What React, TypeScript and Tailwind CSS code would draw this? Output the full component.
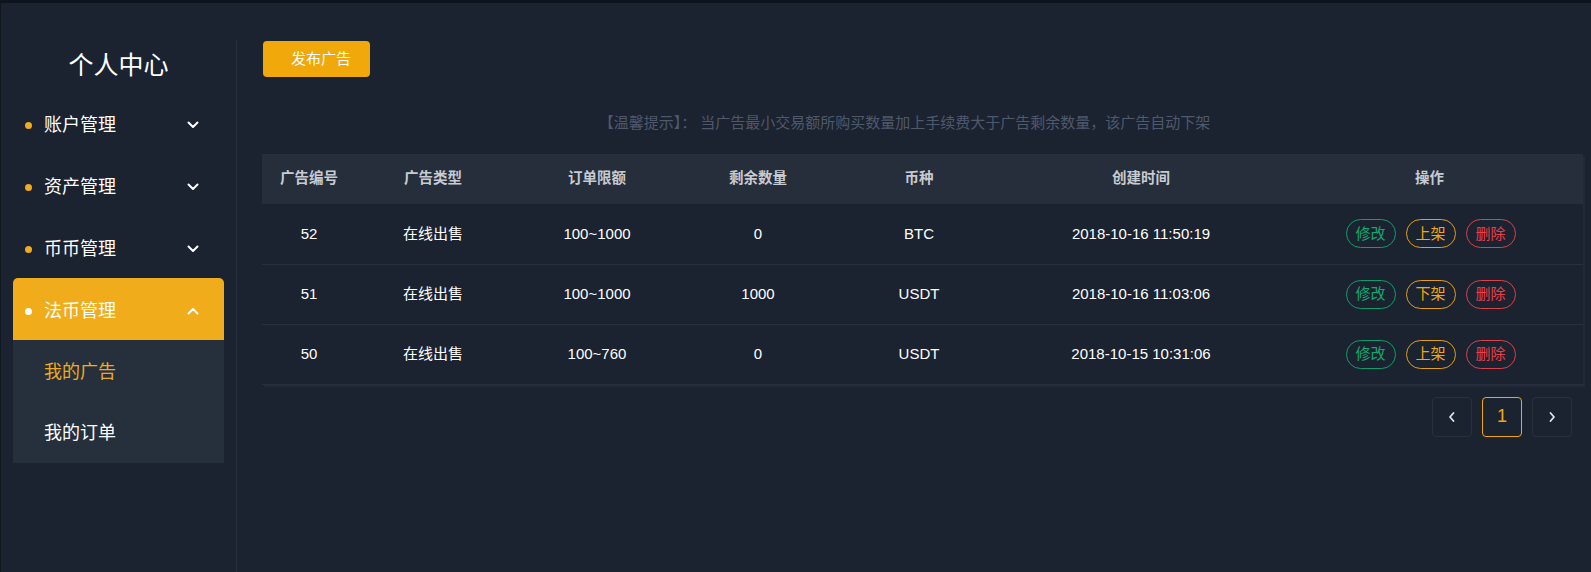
import React from "react";

const FONT = { fontFamily: '"Liberation Sans", "Noto Sans CJK SC", sans-serif' };

function Chevron({ up }: { up?: boolean }) {
  return (
    <svg width="12" height="8" viewBox="0 0 12 8" fill="none" className="shrink-0">
      <path
        d={up ? "M1.5 6.5 L6 2 L10.5 6.5" : "M1.5 1.5 L6 6 L10.5 1.5"}
        stroke="#ffffff"
        strokeWidth="2"
        strokeLinecap="round"
        strokeLinejoin="round"
      />
    </svg>
  );
}

function MenuItem({ label, active }: { label: string; active?: boolean }) {
  return (
    <div
      className={
        "h-[62px] mx-[12px] pl-[12px] pr-[25px] pt-[4px] flex items-center text-[18px] text-white " +
        (active ? "bg-[#f0ac1b] rounded-t-[5px]" : "")
      }
    >
      <span className={"w-[7px] h-[7px] rounded-full " + (active ? "bg-white" : "bg-[#f0ab1f]")} />
      <span className="ml-[12px] flex-1">{label}</span>
      <Chevron up={active} />
    </div>
  );
}

const rows = [
  { id: "52", type: "在线出售", limit: "100~1000", left: "0", coin: "BTC", time: "2018-10-16 11:50:19", shelf: "上架" },
  { id: "51", type: "在线出售", limit: "100~1000", left: "1000", coin: "USDT", time: "2018-10-16 11:03:06", shelf: "下架" },
  { id: "50", type: "在线出售", limit: "100~760", left: "0", coin: "USDT", time: "2018-10-15 10:31:06", shelf: "上架" },
];

const widths = ["w-[94px]", "w-[154px]", "w-[174px]", "w-[148px]", "w-[174px]", "w-[270px]", ""];
const heads = ["广告编号", "广告类型", "订单限额", "剩余数量", "币种", "创建时间", "操作"];

export default function App() {
  return (
    <div
      style={FONT}
      className="w-full h-[572px] bg-[#1b2230] border-t-[3px] border-t-[#0e141d] border-l border-l-[#11171f] flex overflow-hidden"
    >
      {/* sidebar */}
      <aside className="w-[236px] shrink-0 pt-[37px] flex flex-col">
        <div className="flex-1 border-r border-[#283040]">
          <div className="h-[52px] flex items-center justify-center text-[25px] text-white">个人中心</div>
          <MenuItem label="账户管理" />
          <MenuItem label="资产管理" />
          <MenuItem label="币币管理" />
          <MenuItem label="法币管理" active />
          <div className="mx-[12px] bg-[#262f3c] text-[18px]">
            <div className="h-[61px] pt-[4px] flex items-center pl-[31px] text-[#f0ab1f]">我的广告</div>
            <div className="h-[62px] pt-[2px] flex items-center pl-[31px] text-white">我的订单</div>
          </div>
        </div>
      </aside>

      {/* main */}
      <main className="flex-1 pl-[25px] pr-[8px] pt-[38px]">
        <button className="h-[36px] w-[107px] ml-[1px] pl-[28px] text-left rounded-[4px] bg-[#f0a80a] text-white text-[15px]">
          发布广告
        </button>

        <div className="mt-[34px] h-[24px] flex items-center justify-center pr-[36px] text-[15px] text-[#4f596c]">
          【温馨提示】： 当广告最小交易额所购买数量加上手续费大于广告剩余数量，该广告自动下架
        </div>

        <div className="mt-[19px] shadow-[2px_2px_0_#222937]">
          <table className="w-full border-collapse table-fixed text-[15px]">
            <thead>
              <tr className="h-[50px] bg-[#262e3c]">
                {heads.map((h, i) => (
                  <th key={h} className={widths[i] + " font-bold text-[14.5px] text-[#c7cbd2] text-center"}>
                    {h}
                  </th>
                ))}
              </tr>
            </thead>
            <tbody>
              {rows.map((r) => (
                <tr key={r.id} className="h-[60px] border-b border-[#283040] text-white text-center">
                  <td>{r.id}</td>
                  <td>{r.type}</td>
                  <td>{r.limit}</td>
                  <td>{r.left}</td>
                  <td>{r.coin}</td>
                  <td>{r.time}</td>
                  <td>
                    <div className="flex justify-center gap-[10px] pl-[2px]">
                      <span className="w-[50px] h-[29px] rounded-full border border-[#0f9e69] text-[#13a86f] flex items-center justify-center">
                        修改
                      </span>
                      <span className="w-[50px] h-[29px] rounded-full border border-[#e3a010] text-[#f0a80a] flex items-center justify-center">
                        {r.shelf}
                      </span>
                      <span className="w-[50px] h-[29px] rounded-full border border-[#d9424c] text-[#ea3f4a] flex items-center justify-center">
                        删除
                      </span>
                    </div>
                  </td>
                </tr>
              ))}
            </tbody>
          </table>
        </div>

        <div className="mt-[12px] flex justify-end gap-[10px] pr-[11px]">
          <div className="w-[40px] h-[40px] rounded-[4px] border border-[#29313f] flex items-center justify-center">
            <svg width="10" height="14" viewBox="0 0 10 14" fill="none">
              <path d="M6.5 3 L3 7 L6.5 11" stroke="#dfe6f0" strokeWidth="1.8" strokeLinecap="round" strokeLinejoin="round" />
            </svg>
          </div>
          <div className="w-[40px] h-[40px] rounded-[4px] border border-[#f0a80a] flex items-center justify-center text-[18px] text-[#f0a80a]">
            1
          </div>
          <div className="w-[40px] h-[40px] rounded-[4px] border border-[#29313f] flex items-center justify-center">
            <svg width="10" height="14" viewBox="0 0 10 14" fill="none">
              <path d="M3.5 3 L7 7 L3.5 11" stroke="#dfe6f0" strokeWidth="1.8" strokeLinecap="round" strokeLinejoin="round" />
            </svg>
          </div>
        </div>
      </main>
    </div>
  );
}
